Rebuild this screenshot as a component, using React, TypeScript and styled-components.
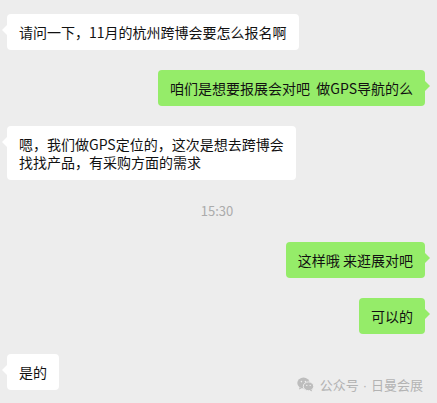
import * as React from "react";
import styled, { createGlobalStyle } from "styled-components";

const GlobalStyle = createGlobalStyle`
    html, body {
        margin: 0;
        padding: 0;
        height: 100%;
        overflow: hidden;
        background-color: #ededed;
    }
    #root {
        height: 100%;
    }
`;

const Chat = styled.div`
    position: relative;
    box-sizing: border-box;
    height: 100vh;
    padding: 14px 12px 0 7px;
    display: flex;
    flex-direction: column;
    gap: 20px;
    background-color: #ededed;
    font-family: "Noto Sans CJK SC", "Noto Sans", sans-serif;
    font-size: 14px;
    color: #111111;
`;

interface SideProps {
    $mine?: boolean;
}

const Row = styled.div<SideProps>`
    display: flex;
    justify-content: ${props => (props.$mine ? "flex-end" : "flex-start")};
`;

const Bubble = styled.div<SideProps>`
    position: relative;
    padding: 9px 12px;
    line-height: 18px;
    border-radius: 4px;
    white-space: pre;
    background-color: ${props => (props.$mine ? "#95ec69" : "#ffffff")};
    &:before {
        content: "";
        position: absolute;
        top: 11px;
        ${props => (props.$mine ? "right: -5px;" : "left: -5px;")}
        border-top: 5px solid transparent;
        border-bottom: 5px solid transparent;
        ${props =>
            props.$mine
                ? "border-left: 5px solid #95ec69;"
                : "border-right: 5px solid #ffffff;"}
    }
`;

const Time = styled.div`
    text-align: center;
    font-size: 13px;
    line-height: 22px;
    color: #ababab;
    margin-left: 2px;
`;

const Watermark = styled.div`
    position: absolute;
    right: 14px;
    bottom: 9px;
    display: flex;
    align-items: center;
    gap: 6px;
    font-size: 13px;
    color: #b3b3b3;
`;

const Dot = styled.span`
    font-family: "Liberation Sans", sans-serif;
    margin: 0 4px;
`;

function WechatIcon() {
    return (
        <svg width="17" height="15" viewBox="0 0 17 15">
            <ellipse cx="6.5" cy="6" rx="6.2" ry="5.4" fill="#bdbdbd" />
            <path d="M2.5 10.2 L2 12.6 L4.8 11.2 Z" fill="#bdbdbd" />
            <ellipse cx="11.5" cy="9.3" rx="5.2" ry="4.4" fill="#bdbdbd" stroke="#ededed" strokeWidth="1" />
            <path d="M14.5 12.5 L15.2 14.5 L12.6 13.3 Z" fill="#bdbdbd" />
            <circle cx="4.4" cy="4.6" r="0.8" fill="#ededed" />
            <circle cx="8.4" cy="4.6" r="0.8" fill="#ededed" />
            <circle cx="9.8" cy="8.4" r="0.7" fill="#ededed" />
            <circle cx="13.2" cy="8.4" r="0.7" fill="#ededed" />
        </svg>
    );
}

const messages: { mine: boolean; text: string }[] = [
    { mine: false, text: "请问一下，11月的杭州跨博会要怎么报名啊" },
    { mine: true, text: "咱们是想要报展会对吧  做GPS导航的么" },
    {
        mine: false,
        text: "嗯，我们做GPS定位的，这次是想去跨博会\n找找产品，有采购方面的需求",
    },
    { mine: true, text: "这样哦 来逛展对吧" },
    { mine: true, text: "可以的" },
    { mine: false, text: "是的" },
];

export default function App() {
    return (
        <>
            <GlobalStyle />
            <Chat>
                {messages.slice(0, 3).map((message, index) => (
                    <Row key={index} $mine={message.mine}>
                        <Bubble $mine={message.mine}>{message.text}</Bubble>
                    </Row>
                ))}
                <Time>15:30</Time>
                {messages.slice(3).map((message, index) => (
                    <Row key={index + 3} $mine={message.mine}>
                        <Bubble $mine={message.mine}>{message.text}</Bubble>
                    </Row>
                ))}
                <Watermark>
                    <WechatIcon />
                    <span>
                        公众号<Dot>·</Dot>日曼会展
                    </span>
                </Watermark>
            </Chat>
        </>
    );
}
